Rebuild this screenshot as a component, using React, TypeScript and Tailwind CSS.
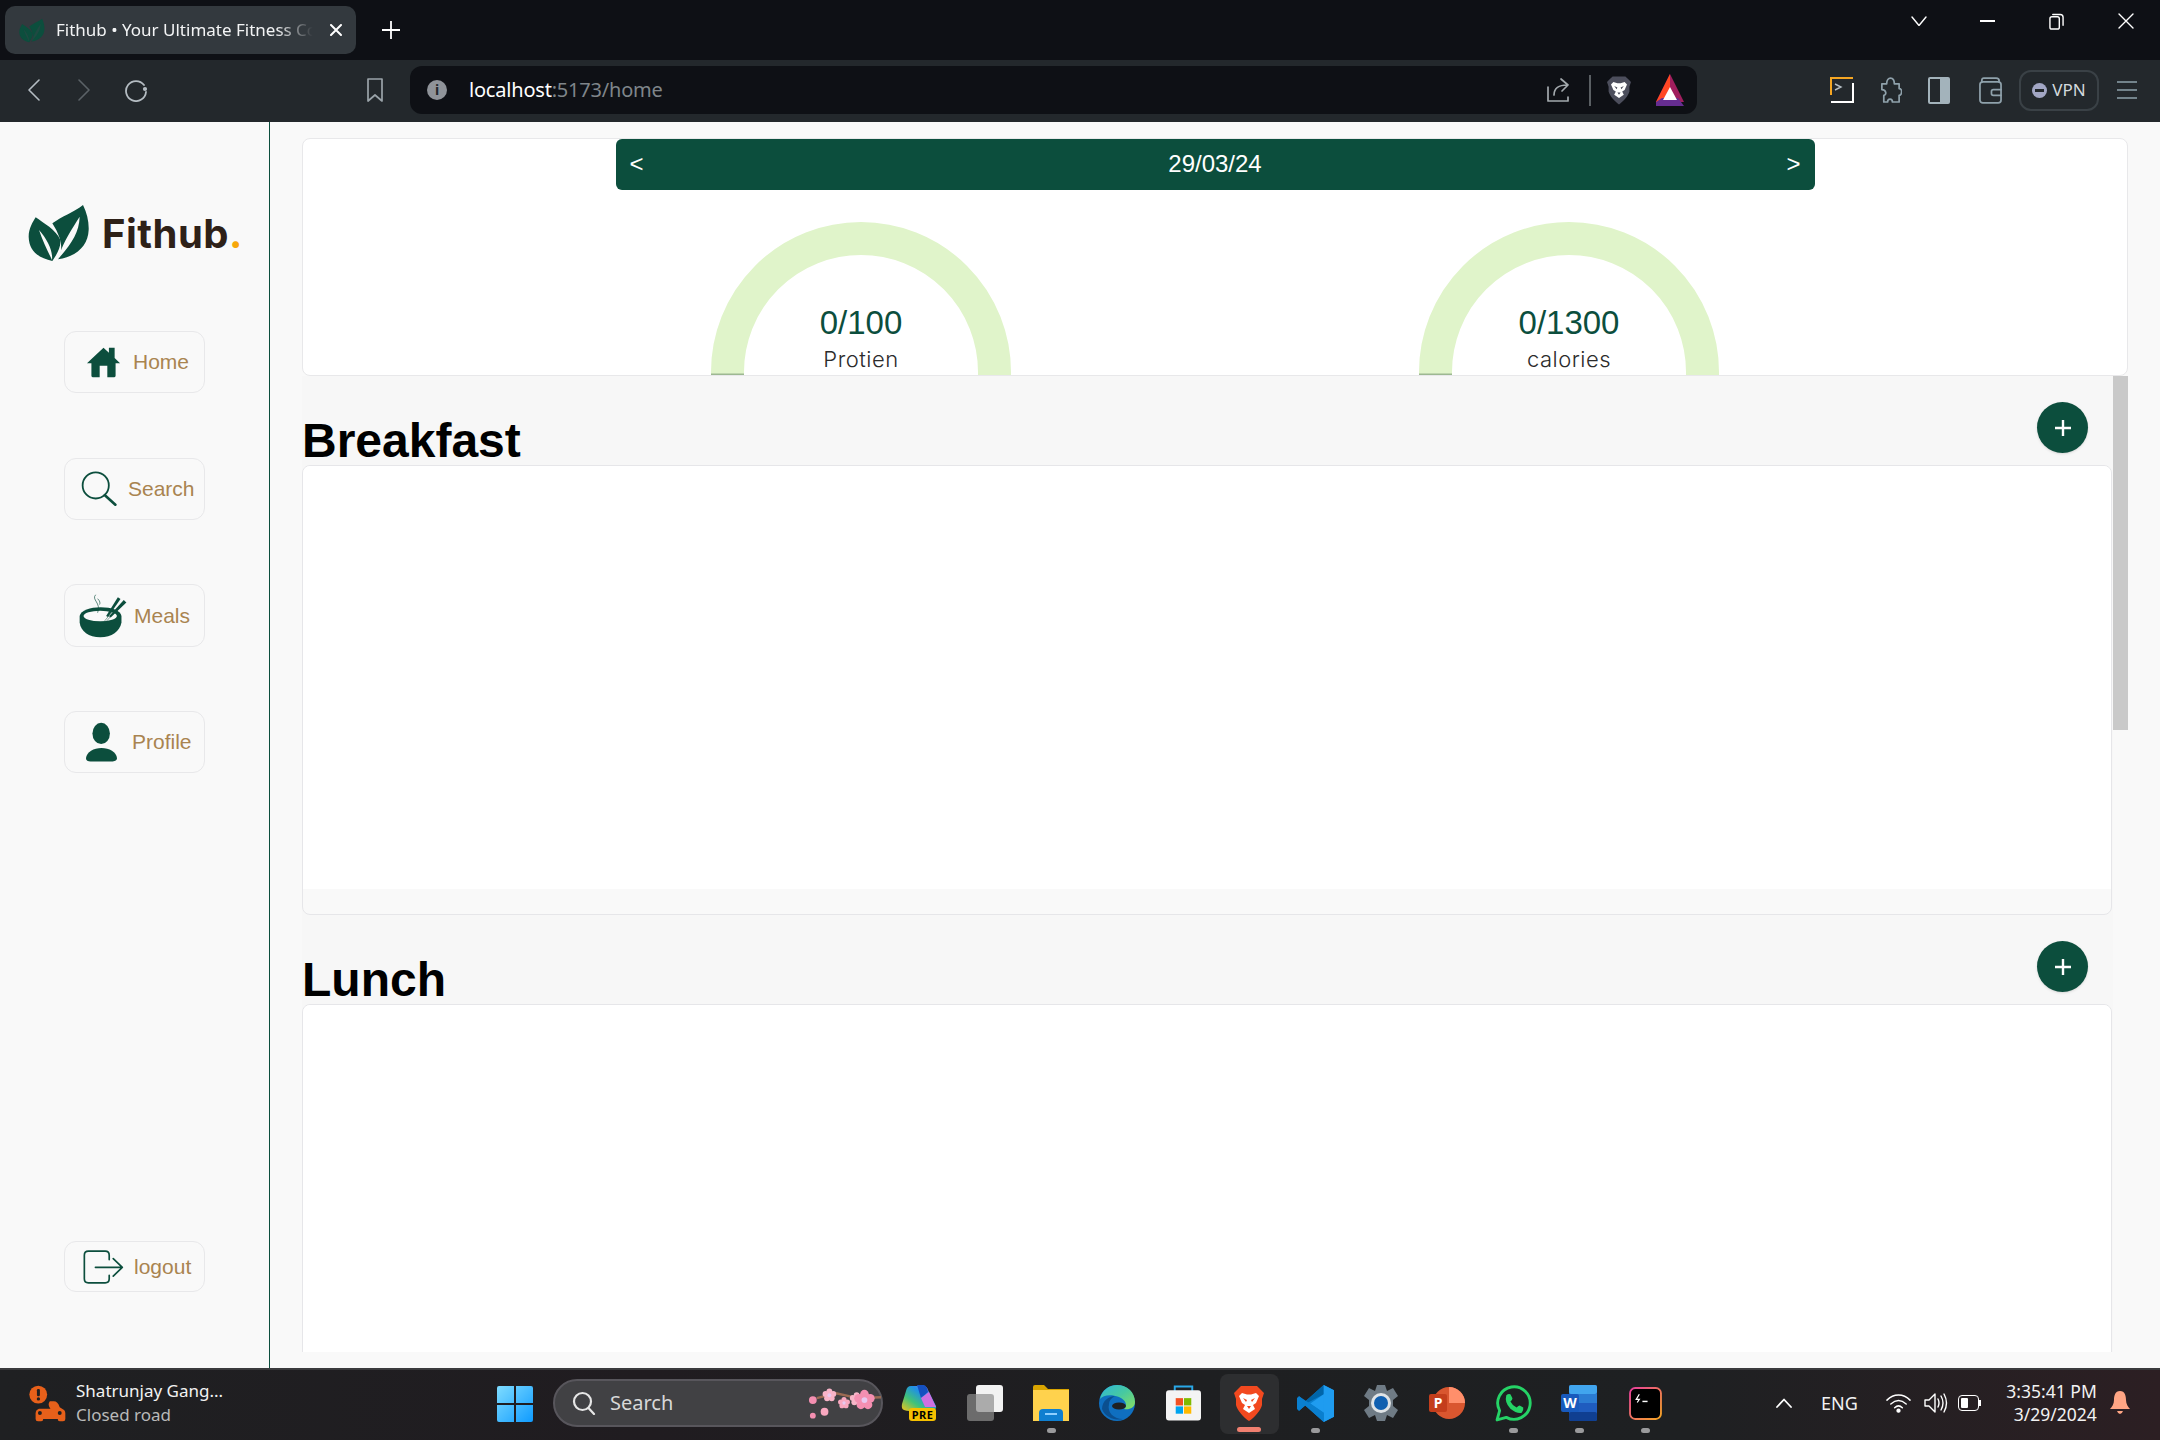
import React from "react";

const G = "#0c4e3d";

function Leaves({ className, vein = "#f9f9f9" }: { className?: string; vein?: string }) {
  return (
    <svg viewBox="85 72 186 174" className={className}>
      <path fill={G} d="M108 112C130 128 170 150 182 180C184 205 170 225 158 243C120 235 88 215 87 170C87 145 100 125 108 112Z" />
      <path fill={vein} d="M118 150C130 185 145 215 157 240C160 215 145 180 118 150Z" />
      <path fill={G} d="M250 75C262 100 268 125 267 150C265 195 235 228 175 238C190 215 190 180 158 130C185 110 225 95 250 75Z" />
      <path fill={vein} d="M240 110C215 150 190 185 175 238C215 190 238 160 240 110Z" />
    </svg>
  );
}

const Stroke = ({ children, box, className, color = "#aab4ba", w = 2 }: { children: React.ReactNode; box: string; className: string; color?: string; w?: number }) => (
  <svg viewBox={box} className={className} fill="none" stroke={color} strokeWidth={w} strokeLinecap="round" strokeLinejoin="round">
    {children}
  </svg>
);

function HomeIcon() {
  return (
    <svg viewBox="255 497 110 98" className="w-[35px] h-[33px] shrink-0">
      <path fill={G} d="M310 500L327 515V500H345V532L362 548H348V588Q348 592 344 592H322V556H298V592H276Q272 592 272 588V548H258Z" />
    </svg>
  );
}
function SearchIcon() {
  return (
    <Stroke box="240 875 110 108" className="w-[36px] h-[36px] shrink-0" color={G} w={5.5}>
      <circle cx="285" cy="918" r="40" />
      <path d="M313 948L345 977" strokeWidth={8} />
    </Stroke>
  );
}
function MealsIcon() {
  return (
    <svg viewBox="235 95 150 137" className="w-[49px] h-[45px] shrink-0">
      <path fill={G} d="M237 165C240 148 270 138 301 138C335 138 362 148 365 165V185C360 212 335 230 300 230C265 230 240 212 237 185Z" />
      <ellipse cx="300" cy="165" rx="51" ry="16" fill="#f9f9f9" />
      <path fill={G} d="M354 108L362 113L324 168L318 165Z" />
      <path fill={G} d="M372 116L380 124L332 170L327 166Z" />
      <path fill="none" stroke={G} strokeWidth={1.5} d="M312 182L340 148M318 182L345 152" />
      <path fill="none" stroke={G} strokeWidth={2} d="M286 100C272 115 304 125 292 155M292 112C300 120 300 125 298 130" />
    </svg>
  );
}
function ProfileIcon() {
  return (
    <svg viewBox="255 484 102 124" className="w-[33px] h-[41px] shrink-0">
      <ellipse cx="305" cy="518" rx="27" ry="33" fill={G} />
      <path fill={G} d="M258 595C260 575 282 563 306 563C330 563 352 575 354 595C354 602 345 605 338 605H272C264 605 258 602 258 595Z" />
    </svg>
  );
}
function LogoutIcon() {
  return (
    <Stroke box="248 90 122 100" className="w-[41px] h-[34px] shrink-0" color={G} w={5}>
      <path d="M326 118V105Q326 93 314 93H264Q252 93 252 105V175Q252 187 264 187H314Q326 187 326 175V165" />
      <path d="M285 141H365M338 115L365 141L338 167" />
    </Stroke>
  );
}

const navCls = "ml-[64px] w-[141px] flex items-center rounded-[12px] border border-[#e8e8ea] text-[#a98450] text-[21px] font-['Liberation_Sans',sans-serif]";

function Gauge({ value, label }: { value: string; label: string }) {
  return (
    <div className="relative w-[300px] h-[153px] overflow-hidden">
      <svg viewBox="0 0 300 153" className="w-[300px] h-[153px]">
        <path d="M16.5 153V150A133.5 133.5 0 0 1 283.5 150V153" fill="none" stroke="#e0f4ca" strokeWidth={33} />
        <rect x="0" y="151.5" width="33" height="1.5" fill="#9db892" />
      </svg>
      <div className="absolute inset-x-0 bottom-0 flex flex-col items-center">
        <div className="text-[33px] leading-[38px] text-[#0c4e3d] font-['Liberation_Sans',sans-serif]">{value}</div>
        <div className="mt-[4px] mb-[3px] text-[22px] leading-[26px] text-[#2b2b2b] font-['Inter',sans-serif] font-light tracking-[0.5px]">{label}</div>
      </div>
    </div>
  );
}

function Section({ title }: { title: string }) {
  return (
    <div>
      <div className="h-[89px] flex items-end justify-between">
        <h2 className="text-[48px] leading-none font-bold text-black">{title}</h2>
        <button className="self-start mt-[26px] mr-[24px] w-[51px] h-[51px] rounded-full bg-[#0c4e3d] shadow-sm flex items-center justify-center">
          <svg viewBox="0 0 20 20" className="w-[20px] h-[20px]" stroke="#fff" strokeWidth={2.4}>
            <path d="M10 2V18M2 10H18" />
          </svg>
        </button>
      </div>
      <div className="h-[450px] border border-[#e6e6e9] rounded-[8px] bg-[#f9f9f9] overflow-hidden">
        <div className="h-[423px] bg-white" />
      </div>
    </div>
  );
}

function BraveShield({ className, bg, face }: { className: string; bg: string; face: string }) {
  return (
    <svg viewBox="0 0 30 36" className={className}>
      <path fill={bg} d="M7 1H23L27 5L30 8L28 14V20C27 25 20 33 15 36C10 33 3 25 2 20V14L0 8L3 5Z" />
      <path fill={face} d="M8 8L13 9.5H17L22 8L25 11L22 18L19 20L21 24L15 28L9 24L11 20L8 18L5 11Z" />
      <path fill={bg} d="M9 13L13 15L12 17ZM21 13L17 15L18 17ZM13 21H17L15 24Z" />
    </svg>
  );
}

function Slot({ children, dot, active }: { children: React.ReactNode; dot?: boolean; active?: boolean }) {
  return (
    <div className="relative w-[66px] h-[72px] flex items-center justify-center">
      {active && <div className="absolute left-[4px] top-[5px] w-[59px] h-[60px] rounded-[8px] bg-[#2d2e30]" />}
      <div className="relative flex items-center justify-center -mt-[4px]">{children}</div>
      {dot && <div className="absolute left-[29px] top-[59px] w-[9px] h-[5px] rounded-full bg-[#9a9a9c]" />}
      {active && <div className="absolute left-[21px] top-[58px] w-[24px] h-[5px] rounded-full bg-[#f08070]" />}
    </div>
  );
}

const Flower = ({ x, y, r, c }: { x: number; y: number; r: number; c: string }) => (
  <g fill={c}>
    <circle cx={x} cy={y - r} r={r * 0.75} />
    <circle cx={x + r} cy={y - r * 0.3} r={r * 0.75} />
    <circle cx={x + r * 0.6} cy={y + r * 0.8} r={r * 0.75} />
    <circle cx={x - r * 0.6} cy={y + r * 0.8} r={r * 0.75} />
    <circle cx={x - r} cy={y - r * 0.3} r={r * 0.75} />
    <circle cx={x} cy={y} r={r * 0.5} fill="#e9c8ef" />
  </g>
);

export default function App() {
  return (
    <div className="w-[2160px] h-[1440px] flex flex-col overflow-hidden font-['Liberation_Sans',sans-serif] bg-[#f9f9f9]">
      {/* Tab strip */}
      <div className="h-[60px] shrink-0 bg-[#0e1015] flex items-start pl-[5px] font-['Noto_Sans',sans-serif]">
        <div className="mt-[6px] w-[351px] h-[48px] rounded-[10px] bg-[#33393e] flex items-center pl-[14px]">
          <Leaves className="w-[26px] h-[25px] shrink-0" vein="#1f4a42" />
          <span className="ml-[11px] w-[262px] overflow-hidden whitespace-nowrap text-[17px] text-[#f3f4f5] [mask-image:linear-gradient(to_right,black_84%,transparent_98%)]">Fithub • Your Ultimate Fitness Coach</span>
          <Stroke box="0 0 12 12" className="ml-[12px] w-[12px] h-[12px] shrink-0" color="#fff" w={2}>
            <path d="M1 1L11 11M11 1L1 11" />
          </Stroke>
        </div>
        <div className="ml-[15px] mt-[10px] w-[40px] h-[40px] flex items-center justify-center">
          <Stroke box="0 0 18 18" className="w-[18px] h-[18px]" color="#fff" w={1.8}>
            <path d="M9 0V18M0 9H18" />
          </Stroke>
        </div>
        <div className="ml-auto flex h-[42px]">
          <div className="w-[69px] flex items-center justify-center">
            <Stroke box="0 0 16 10" className="w-[16px] h-[10px]" color="#fff" w={1.4}><path d="M1 1L8 9.5L15 1" /></Stroke>
          </div>
          <div className="w-[69px] flex items-center justify-center">
            <div className="w-[15px] h-[2px] bg-white" />
          </div>
          <div className="w-[69px] flex items-center justify-center">
            <Stroke box="0 0 16 18" className="w-[15px] h-[17px]" color="#fff" w={1.5}>
              <rect x="1" y="4" width="10" height="13" rx="2" />
              <path d="M4 1.5H12Q15 1.5 15 4.5V13" />
            </Stroke>
          </div>
          <div className="w-[69px] flex items-center justify-center">
            <Stroke box="0 0 16 16" className="w-[16px] h-[16px]" color="#fff" w={1.4}><path d="M1 1L15 15M15 1L1 15" /></Stroke>
          </div>
        </div>
      </div>

      {/* Toolbar */}
      <div className="h-[62px] shrink-0 bg-[#23282c] flex items-center pl-[9px] pb-[2px] font-['Noto_Sans',sans-serif]">
        <div className="w-[50px] flex justify-center">
          <Stroke box="0 0 12 22" className="w-[12px] h-[22px]" color="#b4bcc2" w={1.6}><path d="M11 1L1 11L11 21" /></Stroke>
        </div>
        <div className="w-[50px] flex justify-center">
          <Stroke box="0 0 12 22" className="w-[12px] h-[22px]" color="#5b6267" w={1.6}><path d="M1 1L11 11L1 21" /></Stroke>
        </div>
        <div className="w-[52px] flex justify-center">
          <Stroke box="0 0 24 24" className="ml-[2px] w-[24px] h-[24px]" color="#b4bcc2" w={1.8}>
            <path d="M20 7A10 10 0 1 0 22 14" />
            <circle cx="21" cy="11" r="1.2" fill="#b4bcc2" />
          </Stroke>
        </div>
        <div className="ml-[189px] w-[50px] flex justify-center">
          <Stroke box="0 0 18 24" className="w-[18px] h-[24px]" color="#9aa3a9" w={1.7}><path d="M2 1H16V23L9 17L2 23Z" /></Stroke>
        </div>
        <div className="ml-[10px] w-[1287px] h-[48px] rounded-[12px] bg-[#0e1015] flex items-center pl-[17px]">
          <div className="w-[20px] h-[20px] rounded-full bg-[#8f9399] flex items-center justify-center text-[14px] font-bold text-[#23282c] leading-none">i</div>
          <div className="ml-[22px] text-[20px] whitespace-nowrap tracking-[-0.2px]">
            <span className="text-white">localhost</span>
            <span className="text-[#7f858a]">:5173/home</span>
          </div>
          <div className="ml-auto flex items-center pr-[13px]">
            <Stroke box="0 0 24 26" className="w-[24px] h-[26px]" color="#a3a9ad" w={1.7}>
              <path d="M2 10V24H22V20M8 18C8 11 13 8 21 8M15 2L22 8L16 14" />
            </Stroke>
            <div className="ml-[19px] w-[2px] h-[31px] bg-[#5a5f63]" />
            <BraveShield className="ml-[16px] w-[24px] h-[36px]" bg="#4c4e5c" face="#ffffff" />
            <svg viewBox="0 0 28 32" className="ml-[25px] w-[28px] h-[32px]">
              <path d="M14 0L0 28H28Z" fill="#a01e5e" />
              <path d="M14 0V14L6 28H0Z" fill="#ff4724" />
              <path d="M0 28L6 24H22L28 32H0Z" fill="#662d91" />
              <path d="M14 13L21 26H7Z" fill="#fff" />
            </svg>
          </div>
        </div>
        <div className="ml-[120px] w-[50px] flex justify-center">
          <svg viewBox="0 0 24 26" className="w-[24px] h-[26px]" fill="none" strokeWidth={2}>
            <path d="M23 1H1V18" stroke="#f5a623" />
            <path d="M1 25H23V6" stroke="#fff" />
            <path d="M5 7L11 10L5 13" stroke="#b4bcc2" strokeWidth={1.4} />
          </svg>
        </div>
        <div className="w-[46px] flex justify-center">
          <Stroke box="0 0 24 28" className="w-[23px] h-[27px]" color="#8fa1ab" w={1.8}>
            <path d="M3 7H8C8 3 10 1 12 1C15 1 16 4 16 7H21V12C25 12 24 19 21 19V26H14C14 22 9 22 9 26H5V19C8 19 8 13 3 13Z" />
          </Stroke>
        </div>
        <div className="w-[52px] flex justify-center">
          <div className="w-[22px] h-[27px] rounded-[2px] border-2 border-[#a3b3bb] flex justify-end">
            <div className="w-[8px] h-full bg-[#a3b3bb]" />
          </div>
        </div>
        <div className="w-[50px] flex justify-center">
          <Stroke box="0 0 24 28" className="w-[23px] h-[27px]" color="#8fa1ab" w={1.8}>
            <rect x="1" y="5" width="22" height="22" rx="3" />
            <path d="M3 5V3Q3 1 5 1H18Q21 1 21 4V5M23 13H15Q13 13 13 15V17Q13 19 15 19H23" />
          </Stroke>
        </div>
        <div className="ml-[4px] w-[80px] h-[41px] rounded-[12px] border-2 border-[#3a4146] flex items-center justify-center gap-[5px]">
          <div className="w-[15px] h-[15px] rounded-full bg-[#a2a6c4] flex items-center justify-center">
            <div className="w-[9px] h-[3px] bg-[#23282c]" />
          </div>
          <span className="text-[17px] text-[#d4dadd]">VPN</span>
        </div>
        <div className="ml-[8px] w-[40px] flex justify-center">
          <Stroke box="0 0 20 20" className="w-[20px] h-[20px]" color="#8fa1ab" w={1.7}><path d="M0 2H20M0 10H20M0 18H20" /></Stroke>
        </div>
      </div>

      {/* Page */}
      <div className="flex-1 min-h-0 flex">
        <aside className="w-[270px] shrink-0 border-r border-[#0c4e3d] flex flex-col bg-[#f9f9f9]">
          <div className="mt-[81px] ml-[28px] h-[60px] flex items-center">
            <Leaves className="w-[62px] h-[58px] shrink-0" />
            <div className="ml-[12px] mt-[2px] text-[40px] font-bold leading-none text-[#2e2118] font-['Inter',sans-serif] tracking-[0.5px] whitespace-nowrap">
              Fithub<span className="text-[#f7a70a]">.</span>
            </div>
          </div>
          <div className={`${navCls} mt-[68px] h-[62px] pl-[21px] gap-[12px]`}><HomeIcon /><span>Home</span></div>
          <div className={`${navCls} mt-[65px] h-[62px] pl-[16px] gap-[11px]`}><SearchIcon /><span>Search</span></div>
          <div className={`${navCls} mt-[64px] h-[63px] pl-[14px] gap-[6px]`}><MealsIcon /><span>Meals</span></div>
          <div className={`${navCls} mt-[64px] h-[62px] pl-[20px] gap-[14px]`}><ProfileIcon /><span>Profile</span></div>
          <div className={`${navCls} mt-auto mb-[76px] h-[51px] pl-[18px] gap-[10px]`}><LogoutIcon /><span>logout</span></div>
        </aside>

        <main className="flex-1 min-w-0 flex flex-col pt-[16px] pb-[16px] pl-[32px] pr-[32px]">
          <div className="h-[238px] shrink-0 bg-white border border-[#e8e8ea] rounded-[8px] flex flex-col items-center overflow-hidden">
            <div className="w-[1199px] h-[51px] shrink-0 rounded-[6px] bg-[#0c4e3d] text-white flex items-center justify-between px-[14px] pb-[2px] text-[24px]">
              <span>&lt;</span>
              <span>29/03/24</span>
              <span>&gt;</span>
            </div>
            <div className="mt-[32px] flex justify-center gap-[408px]">
              <Gauge value="0/100" label="Protien" />
              <Gauge value="0/1300" label="calories" />
            </div>
          </div>
          <div className="flex-1 min-h-0 flex overflow-hidden">
            <div className="flex-1 min-w-0 bg-[#f7f7f7] pr-[1px]">
              <Section title="Breakfast" />
              <Section title="Lunch" />
            </div>
            <div className="w-[15px] shrink-0">
              <div className="h-[354px] bg-[#c9c9c9]" />
            </div>
          </div>
        </main>
      </div>

      {/* Taskbar */}
      <div className="h-[72px] shrink-0 border-t-2 border-[#3b3b3d] flex items-center font-['Noto_Sans',sans-serif] bg-[linear-gradient(90deg,#1f2022_0%,#201c20_30%,#1e1f21_55%,#1e2022_78%,#2c1f23_100%)]">
        <div className="w-[482px] shrink-0 flex items-center pl-[29px] -mt-[4px]">
          <svg viewBox="85 493 112 112" className="w-[37px] h-[37px] shrink-0">
            <path fill="#e7601a" d="M115 565H150Q140 552 148 542H160Q172 542 178 560L190 568Q196 572 195 585V596Q195 603 188 603H178Q172 603 172 596H128Q128 603 122 603H112Q105 603 105 596V585Q104 572 110 568Z" />
            <circle cx="118" cy="578" r="6" fill="#1f2022" />
            <circle cx="178" cy="578" r="6" fill="#1f2022" />
            <circle cx="113" cy="522" r="27" fill="#e7601a" />
            <rect x="109" y="505" width="9" height="22" rx="4" fill="#1f2022" />
            <circle cx="113.500" cy="535" r="5" fill="#1f2022" />
          </svg>
          <div className="ml-[10px] leading-[24px] whitespace-nowrap">
            <div className="text-[17px] text-[#f2f2f2]">Shatrunjay Gang...</div>
            <div className="text-[17px] text-[#b9b9b9]">Closed road</div>
          </div>
        </div>
        <div className="w-[66px] shrink-0 flex justify-center -mt-[3px]">
          <svg viewBox="0 0 36 36" className="w-[36px] h-[36px]">
            <defs>
              <linearGradient id="win" x1="0" y1="0" x2="1" y2="1">
                <stop offset="0" stopColor="#7fdcff" />
                <stop offset="1" stopColor="#0f9bff" />
              </linearGradient>
            </defs>
            <path fill="url(#win)" d="M2 0H17V17H0V2Q0 0 2 0ZM19 0H34Q36 0 36 2V17H19ZM0 19H17V36H2Q0 36 0 34ZM19 19H36V34Q36 36 34 36H19Z" />
          </svg>
        </div>
        <div className="ml-[5px] w-[330px] h-[48px] shrink-0 -mt-[4px] rounded-full border-2 border-[#58565c] bg-[#414144] flex items-center pl-[17px]">
          <Stroke box="0 0 24 24" className="w-[24px] h-[24px] shrink-0" color="#e6e6e6" w={2.2}>
            <circle cx="10.500" cy="10.500" r="8.500" />
            <path d="M16.500 17L22 23" />
          </Stroke>
          <span className="ml-[14px] text-[20px] text-[#d8d8d8]">Search</span>
          <svg viewBox="0 0 76 34" className="ml-auto w-[74px] h-[34px]">
            <path d="M10 12L30 7L52 12L76 11" stroke="#9a6a52" strokeWidth={2.500} fill="none" />
            <Flower x={51} y={13} r={4} c="#f7b6c8" />
            <Flower x={38} y={17} r={3.500} c="#f9a8c0" />
            <Flower x={23} y={9} r={4} c="#f8b4c8" />
            <Flower x={59} y={14} r={6} c="#f48fb1" />
            <circle cx="6" cy="14" r="4" fill="#f48fb1" />
            <circle cx="18" cy="26" r="4" fill="#f9a8c0" />
            <circle cx="6" cy="30" r="3" fill="#f48fb1" />
          </svg>
        </div>
        <div className="ml-[3px] flex shrink-0">
          <Slot>
            <div className="relative w-[36px] h-[38px]">
              <svg viewBox="0 0 36 30" className="w-[36px] h-[30px]">
                <defs>
                  <linearGradient id="cop" x1="0" y1="1" x2="1" y2="0">
                    <stop offset="0" stopColor="#f5c518" />
                    <stop offset="0.35" stopColor="#3fc27a" />
                    <stop offset="0.65" stopColor="#1f8fe8" />
                    <stop offset="1" stopColor="#d070e0" />
                  </linearGradient>
                </defs>
                <path fill="url(#cop)" d="M10 2H22Q26 2 27 6L35 22Q36 26 31 26H14Q8 28 3 26Q0 25 1 20L5 7Q6 2 10 2Z" />
                <path fill="#1550c0" d="M16 1H23Q26 2 27 8L20 14Z" />
                <path fill="#d070e0" d="M20 14L28 8L35 23H24Z" />
              </svg>
              <div className="absolute left-[8px] top-[24px] w-[27px] h-[13px] rounded-[3px] bg-[#f6c000] text-[11px] leading-[13px] font-bold text-black text-center tracking-[0.5px]">PRE</div>
            </div>
          </Slot>
          <Slot>
            <div className="relative w-[36px] h-[36px]">
              <div className="absolute left-[9px] top-0 w-[27px] h-[27px] rounded-[3px] bg-[#f2f2f2]" />
              <div className="absolute left-0 top-[9px] w-[27px] h-[27px] rounded-[3px] bg-[#8d8d8d]/70" />
            </div>
          </Slot>
          <Slot dot>
            <svg viewBox="0 0 36 36" className="w-[36px] h-[36px]">
              <path fill="#d9a400" d="M0 2Q0 0 2 0H11L15 4H36V10H0Z" />
              <path fill="#ffd24d" d="M0 5H36V36H0Z" />
              <path fill="#0f7fd0" d="M6 36V28Q6 24 10 24H26Q30 24 30 28V36Z" />
              <rect x="12" y="28" width="12" height="2" fill="#8fd0ff" />
            </svg>
          </Slot>
          <Slot>
            <svg viewBox="0 0 36 36" className="w-[36px] h-[36px]">
              <defs>
                <linearGradient id="edge" x1="0" y1="0" x2="1" y2="1">
                  <stop offset="0" stopColor="#2fb6d8" />
                  <stop offset="0.5" stopColor="#47c9a0" />
                  <stop offset="1" stopColor="#8adf5f" />
                </linearGradient>
              </defs>
              <circle cx="18" cy="18" r="18" fill="#0f6fc0" />
              <path fill="url(#edge)" d="M1 14C3 5 10 0 18 0C28 0 36 7 36 17C36 23 30 25 25 24C29 21 27 15 20 12C12 9 4 10 1 14Z" />
              <path fill="#0b4f8f" d="M10 19C8 27 14 34 24 34C18 36 6 33 3 24C3 16 10 11 16 11C12 13 10 16 10 19Z" />
              <ellipse cx="20" cy="21" rx="7" ry="3.500" fill="#1f2022" />
            </svg>
          </Slot>
          <Slot>
            <svg viewBox="0 0 36 36" className="w-[35px] h-[36px]">
              <path d="M9 7V1H27V7" fill="none" stroke="#29a8e8" strokeWidth={2} />
              <rect x="0" y="5" width="36" height="31" rx="3" fill="#f4f4f4" />
              <rect x="10" y="13" width="7.500" height="7.500" fill="#f25022" />
              <rect x="18.500" y="13" width="7.500" height="7.500" fill="#7fba00" />
              <rect x="10" y="21.500" width="7.500" height="7.500" fill="#00a4ef" />
              <rect x="18.500" y="21.500" width="7.500" height="7.500" fill="#ffb900" />
            </svg>
          </Slot>
          <Slot active>
            <BraveShield className="w-[30px] h-[36px]" bg="#f2491f" face="#ffffff" />
          </Slot>
          <Slot dot>
            <svg viewBox="0 0 36 36" className="w-[37px] h-[37px]">
              <path fill="#0a7fcf" d="M26 0L36 5V31L26 36L8 20L2 25L0 23V13L2 11L8 16Z" />
              <path fill="#0065a9" d="M0 23L26 0V9L9 18L2 25Z" />
              <path fill="#1f9cf0" d="M26 0L36 5V31L26 36ZM26 9L13 18L26 27Z" />
              <path fill="#0a7fcf" d="M0 13L2 11L26 27V36L8 20L2 25L0 23Z" />
            </svg>
          </Slot>
          <Slot>
            <svg viewBox="0 0 36 36" className="w-[36px] h-[36px]">
              <path fill="#6f7b85" d="M14 0H22L24 6L30 3L35 11L30 15V21L35 25L30 33L24 30L22 36H14L12 30L6 33L1 25L6 21V15L1 11L6 3L12 6Z" />
              <circle cx="18" cy="18" r="10" fill="#dfe3e6" />
              <circle cx="18" cy="18" r="7" fill="#0f5fb0" />
            </svg>
          </Slot>
          <Slot>
            <svg viewBox="0 0 36 32" className="w-[36px] h-[32px]">
              <circle cx="20" cy="16" r="16" fill="#d9562f" />
              <path d="M20 0A16 16 0 0 1 36 16H20Z" fill="#ff8f6b" />
              <rect x="0" y="7" width="18" height="18" rx="2" fill="#c43e1c" />
              <text x="9" y="21" textAnchor="middle" fontSize="14" fontWeight="700" fill="#fff" fontFamily="Noto Sans, sans-serif">P</text>
            </svg>
          </Slot>
          <Slot dot>
            <svg viewBox="0 0 36 36" className="w-[37px] h-[37px]" fill="none">
              <path d="M2 34L4.500 25A15.800 15.800 0 1 1 11 31.500Z" stroke="#25d366" strokeWidth={2.800} strokeLinejoin="round" />
              <path fill="#25d366" d="M11 10Q13 8 15 9L17 13Q17 15 15 16Q17 20 21 22Q23 20 24 20L27.500 22Q28 25 26 27Q21 28 15 23Q9 17 11 10Z" />
            </svg>
          </Slot>
          <Slot dot>
            <svg viewBox="0 0 36 36" className="w-[36px] h-[36px]">
              <rect x="8" y="0" width="28" height="36" rx="2" fill="#1f5cbf" />
              <rect x="8" y="0" width="28" height="9" rx="2" fill="#41a5ee" />
              <rect x="8" y="9" width="28" height="9" fill="#2b7cd3" />
              <rect x="8" y="27" width="28" height="9" rx="2" fill="#103f91" />
              <rect x="0" y="9" width="18" height="18" rx="2" fill="#185abd" />
              <text x="9" y="23" textAnchor="middle" fontSize="14" fontWeight="700" fill="#fff" fontFamily="Noto Sans, sans-serif">W</text>
            </svg>
          </Slot>
          <Slot dot>
            <svg viewBox="0 0 32 32" className="w-[33px] h-[33px]" fill="none">
              <defs>
                <linearGradient id="term" x1="0" y1="0" x2="1" y2="1">
                  <stop offset="0" stopColor="#e83e9c" />
                  <stop offset="1" stopColor="#f5a623" />
                </linearGradient>
              </defs>
              <rect x="1" y="1" width="30" height="30" rx="5" fill="#000" stroke="url(#term)" strokeWidth={1.800} />
              <path d="M10 7L7 12H10L8 15" stroke="#fff" strokeWidth={1.200} />
              <path d="M13 14H18" stroke="#fff" strokeWidth={1.400} />
            </svg>
          </Slot>
        </div>
        <div className="flex-1 min-w-0 flex items-center h-full -mt-[4px] text-[#f2f2f2]">
          <Stroke box="0 0 16 10" className="ml-[98px] w-[16px] h-[10px] shrink-0" color="#fff" w={1.8}><path d="M1 9L8 1.500L15 9" /></Stroke>
          <span className="ml-[29px] text-[18px] whitespace-nowrap">ENG</span>
          <Stroke box="0 0 26 20" className="ml-[28px] w-[25px] h-[20px] shrink-0" color="#fff" w={1.5}>
            <path d="M1 7C8 0 18 0 25 7M5 11C10 6.500 16 6.500 21 11M9 15C11.500 12.500 14.500 12.500 17 15" />
            <circle cx="13" cy="18" r="1.500" fill="#fff" />
          </Stroke>
          <Stroke box="0 0 24 22" className="ml-[13px] w-[24px] h-[22px] shrink-0" color="#fff" w={1.4}>
            <path d="M1 8H5L11 2V20L5 14H1ZM14 7Q16 11 14 15M17 4Q21 11 17 18M20 2Q25 11 20 20" />
          </Stroke>
          <div className="ml-[10px] w-[24px] h-[16px] shrink-0 flex items-center">
            <div className="w-[21px] h-[16px] rounded-[4px] border-[1.5px] border-white p-[2px]">
              <div className="w-[7px] h-full bg-white rounded-[1px]" />
            </div>
            <div className="w-[2px] h-[6px] bg-white" />
          </div>
          <div className="ml-[13px] w-[102px] shrink-0 text-right text-[17.500px] leading-[23px] whitespace-nowrap">
            <div>3:35:41 PM</div>
            <div>3/29/2024</div>
          </div>
          <svg viewBox="0 0 20 24" className="ml-[13px] w-[20px] h-[24px] shrink-0">
            <path fill="#ffa584" d="M10 0C15 0 16 5 16 9C16 13 18 16 20 18H0C2 16 4 13 4 9C4 5 5 0 10 0ZM7 20H13Q12 23 10 23Q8 23 7 20Z" />
          </svg>
        </div>
      </div>
    </div>
  );
}
